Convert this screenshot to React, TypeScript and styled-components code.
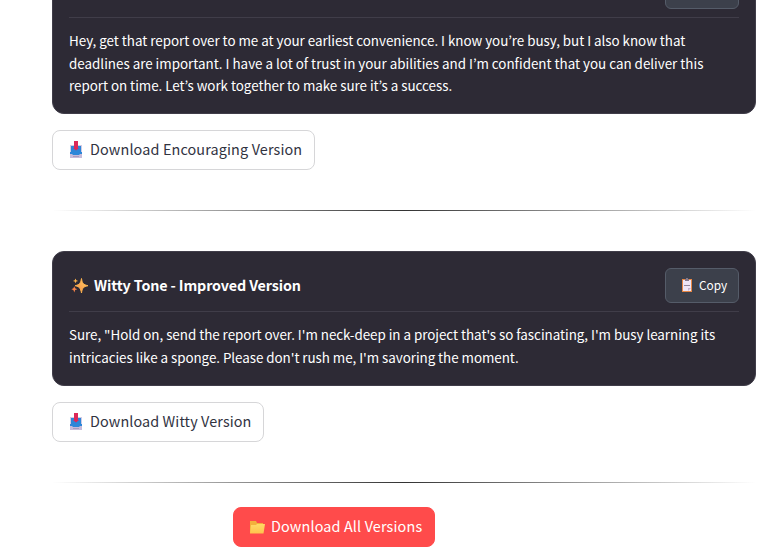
import React from "react";
import styled, { createGlobalStyle } from "styled-components";

const GlobalStyle = createGlobalStyle`
  * { box-sizing: border-box; }
  body {
    margin: 0;
    background: #ffffff;
    font-family: "Noto Sans CJK KR", "Source Sans Pro", sans-serif;
    overflow: hidden;
  }
  #root { height: 549px; overflow: hidden; }
`;

const Page = styled.main`
  display: flex;
  flex-direction: column;
  align-items: flex-start;
  width: 704px;
  margin: -43px 0 0 52px;
`;

const Card = styled.section<{ $height: number }>`
  width: 100%;
  height: ${(p) => p.$height}px;
  padding: 16px;
  background: #2d2a35;
  border: 1px solid #403d49;
  border-radius: 12px;
  color: #ffffff;
`;

const CardHeader = styled.header`
  display: flex;
  align-items: center;
  justify-content: flex-end;
  height: 44px;
  padding-bottom: 8px;
  border-bottom: 1px solid #403d49;
`;

const Title = styled.h3`
  display: flex;
  align-items: center;
  margin: 0 auto 0 0;
  padding-left: 2px;
  font-size: 14.3px;
  line-height: 20px;
  font-weight: 700;
  white-space: nowrap;
  svg { margin-right: 5px; }
`;

const CopyButton = styled.button`
  display: flex;
  align-items: center;
  width: 74px;
  height: 35px;
  padding: 0 0 0 13px;
  background: #3c404b;
  border: 1px solid #555c69;
  border-radius: 6px;
  color: #ffffff;
  font: 400 11.9px/18px "Noto Sans CJK KR", sans-serif;
  white-space: nowrap;
  svg { margin: 0 5px 2px 0; }
`;

const Message = styled.p`
  margin: 11px 0 0;
  font-size: 13.4px;
  line-height: 22.5px;
`;

const Line = styled.span<{ $spacing?: number }>`
  display: block;
  width: max-content;
  white-space: nowrap;
  letter-spacing: ${(p) => p.$spacing ?? 0}px;
`;

const Label = styled(Line)`
  padding-bottom: 2px;
`;

const DownloadButton = styled.button<{ $width: number; $primary?: boolean }>`
  display: flex;
  align-items: center;
  width: ${(p) => p.$width}px;
  height: 40px;
  margin: ${(p) => (p.$primary ? "24px 0 0 181px" : "16px 0 0")};
  padding: 0 0 0 ${(p) => (p.$primary ? 15 : 16)}px;
  background: ${(p) => (p.$primary ? "#ff4b4b" : "#ffffff")};
  border: 1px solid ${(p) => (p.$primary ? "#ff4b4b" : "#d6d6d8")};
  border-radius: 8px;
  color: ${(p) => (p.$primary ? "#ffffff" : "#31333f")};
  font: 400 14.4px/24px "Noto Sans CJK KR", sans-serif;
  white-space: nowrap;
  svg { margin-right: ${(p) => (p.$primary ? 5 : 7)}px; }
`;

const Divider = styled.div<{ $after: number }>`
  width: 100%;
  height: 1px;
  margin: 40px 0 ${(p) => p.$after}px;
  background: linear-gradient(to right, transparent, #333333, transparent);
`;

const InboxIcon = () => (
  <svg width="14" height="18" viewBox="0 0 14 18">
    <path d="M1 4h12v13H1z" fill="#d3cae3" />
    <path d="M2 5h10v6h1v3H1v-3h1z" fill="#2c86d8" />
    <path d="M1 13h2l1 1h6l1-1h2v4H1z" fill="#c6bbda" />
    <path d="M4 15h6v1H4z" fill="#a99bbd" />
    <path d="M5 0h4v7h1L7 9.5 4 7h1z" fill="#dc2858" />
  </svg>
);

const SparklesIcon = () => (
  <svg width="18" height="18" viewBox="0 0 18 18">
    <defs>
      <linearGradient id="spark" x1="1" y1="0" x2="0" y2="1">
        <stop stopColor="#ffd865" />
        <stop offset="1" stopColor="#f98245" />
      </linearGradient>
    </defs>
    <path d="M10.5 1.5C11.2 6.2 12.2 7.7 17 8.7C12.2 9.7 11.2 11 10.5 16C9.5 11 8.6 9.8 4.2 8.7C8.6 7.7 9.5 6.4 10.5 1.5Z" fill="url(#spark)" stroke="#fdb24f" strokeWidth="1" />
    <path d="M4.5 1.5l.8 1.7 1.9.7-1.9.7-.8 1.7-.8-1.7-1.8-.7 1.8-.7z" fill="#ffb44b" />
    <path d="M3.3 9.2l.8 2.1 2.2.9-2.2.9-.8 2.4-.9-2.4L.4 12.2l2-.9z" fill="#fb8549" />
  </svg>
);

const ClipboardIcon = () => (
  <svg width="15" height="16" viewBox="0 0 15 16">
    <path d="M3 2h10v13H3z" fill="#e78745" />
    <path d="M4 3h8v11H4z" fill="#eee5f5" />
    <path d="M6 2h1V1h2v1h1v2H6z" fill="#83788b" />
    <path d="M5 8h6v1H5z" fill="#92869c" />
    <path d="M9 14v-3h3z" fill="#c7b3cd" />
  </svg>
);

const FolderIcon = () => (
  <svg width="17" height="16" viewBox="0 0 17 16">
    <defs>
      <linearGradient id="folder" x2="0" y2="1">
        <stop stopColor="#ffda66" />
        <stop offset="1" stopColor="#ffc34d" />
      </linearGradient>
    </defs>
    <path d="M1 2h6l1 2h6v10H1z" fill="#f3b03c" />
    <path d="M2 6h5l1-1h8l-1.5 9.5H1z" fill="url(#folder)" />
  </svg>
);

const ToneHeader = ({ title }: { title: string }) => (
  <CardHeader>
    <Title><SparklesIcon /><Label $spacing={-0.13}>{title}</Label></Title>
    <CopyButton><ClipboardIcon /><Label>Copy</Label></CopyButton>
  </CardHeader>
);

export default function App() {
  return (
    <>
      <GlobalStyle />
      <Page>
        <Card $height={157}>
          <CardHeader>
            <CopyButton />
          </CardHeader>
          <Message>
            <Line $spacing={-0.03}>Hey, get that report over to me at your earliest convenience. I know you’re busy, but I also know that</Line>
            <Line $spacing={-0.005}>deadlines are important. I have a lot of trust in your abilities and I’m confident that you can deliver this</Line>
            <Line $spacing={-0.03}>report on time. Let’s work together to make sure it’s a success.</Line>
          </Message>
        </Card>
        <DownloadButton $width={263}>
          <InboxIcon /><Label $spacing={0.13}>Download Encouraging Version</Label>
        </DownloadButton>
        <Divider $after={40} />
        <Card $height={135}>
          <ToneHeader title="Witty Tone - Improved Version" />
          <Message>
            <Line $spacing={-0.03}>Sure, "Hold on, send the report over. I'm neck-deep in a project that's so fascinating, I'm busy learning its</Line>
            <Line $spacing={-0.045}>intricacies like a sponge. Please don't rush me, I'm savoring the moment.</Line>
          </Message>
        </Card>
        <DownloadButton $width={212}>
          <InboxIcon /><Label $spacing={0.1}>Download Witty Version</Label>
        </DownloadButton>
        <Divider $after={0} />
        <DownloadButton $width={202} $primary>
          <FolderIcon /><Label $spacing={0.14}>Download All Versions</Label>
        </DownloadButton>
      </Page>
    </>
  );
}
